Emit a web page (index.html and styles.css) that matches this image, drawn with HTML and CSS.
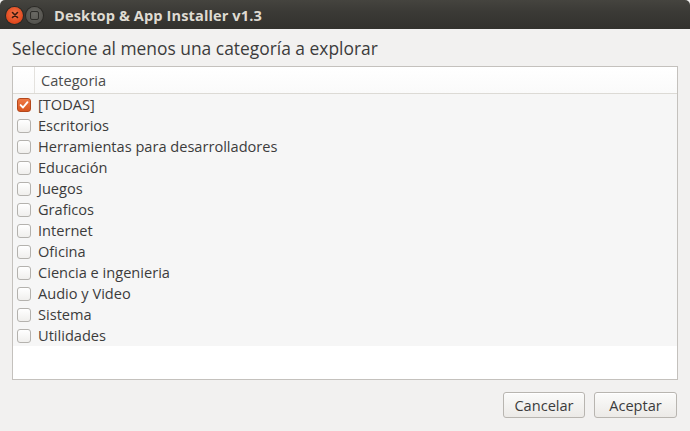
FILE: index.html
```html
<!DOCTYPE html>
<html>
<head>
<meta charset="utf-8">
<link rel="stylesheet" href="styles.css">
</head>
<body>
<div class="window">
  <div class="titlebar">
    <span class="btn-close"><svg width="16" height="16" viewBox="0 0 16 16"><path d="M5.5 5.5 L10.5 10.5 M10.5 5.5 L5.5 10.5" stroke="#3a1a0e" stroke-width="1.6" stroke-linecap="round"/></svg></span>
    <span class="btn-min"><span class="sq"></span></span>
    <span class="title">Desktop &amp; App Installer v1.3</span>
  </div>
  <div class="content">
    <div class="label">Seleccione al menos una categoría a explorar</div>
    <div class="list">
      <div class="header">
        <div class="hcell-check"></div>
        <div class="hcell">Categoria</div>
      </div>
      <div class="rows">
        <div class="row"><span class="cb checked"><svg width="14" height="14" viewBox="0 0 14 14"><path d="M3.6 7.1 L6 9.5 L10.5 4.2" fill="none" stroke="#fff" stroke-width="1.9" stroke-linecap="round" stroke-linejoin="round"/></svg></span><span class="txt">[TODAS]</span></div>
        <div class="row"><span class="cb"></span><span class="txt">Escritorios</span></div>
        <div class="row"><span class="cb"></span><span class="txt">Herramientas para desarrolladores</span></div>
        <div class="row"><span class="cb"></span><span class="txt">Educación</span></div>
        <div class="row"><span class="cb"></span><span class="txt">Juegos</span></div>
        <div class="row"><span class="cb"></span><span class="txt">Graficos</span></div>
        <div class="row"><span class="cb"></span><span class="txt">Internet</span></div>
        <div class="row"><span class="cb"></span><span class="txt">Oficina</span></div>
        <div class="row"><span class="cb"></span><span class="txt">Ciencia e ingenieria</span></div>
        <div class="row"><span class="cb"></span><span class="txt">Audio y Video</span></div>
        <div class="row"><span class="cb"></span><span class="txt">Sistema</span></div>
        <div class="row"><span class="cb"></span><span class="txt">Utilidades</span></div>
      </div>
      <div class="empty"></div>
    </div>
    <div class="buttons">
      <button class="button">Cancelar</button>
      <button class="button">Aceptar</button>
    </div>
  </div>
</div>
</body>
</html>
```

FILE: styles.css
```css
html, body {
  margin: 0;
  padding: 0;
  background: #f2f1f0;
  width: 690px;
  height: 431px;
  overflow: hidden;
}
body {
  font-family: "Open Sans", "DejaVu Sans", sans-serif;
  font-size: 14.6px;
  color: #3c3c3c;
}
.window {
  display: flex;
  flex-direction: column;
  height: 431px;
}
.titlebar {
  height: 29px;
  background: linear-gradient(#45443f, #3b3a36 40%, #32312d);
  border-radius: 5px 5px 0 0;
  display: flex;
  align-items: center;
  padding-left: 6px;
  padding-top: 1px;
  box-sizing: border-box;
}
.btn-close {
  width: 17px;
  height: 17px;
  border-radius: 50%;
  background: radial-gradient(circle at 50% 40%, #f4764a, #e0471c 70%, #c23a12);
  box-shadow: 0 0 0 1px #2a2925;
  display: flex;
  align-items: center;
  justify-content: center;
}
.btn-min {
  width: 17px;
  height: 17px;
  border-radius: 50%;
  background: radial-gradient(circle at 50% 40%, #6a6964, #55544f 70%, #4a4945);
  box-shadow: 0 0 0 1px #2a2925;
  margin-left: 3px;
  display: flex;
  align-items: center;
  justify-content: center;
}
.btn-min .sq {
  width: 7px;
  height: 7px;
  border: 1.5px solid #2e2d2a;
  border-radius: 2px;
}
.title {
  margin-left: 11px;
  color: #dfdbd2;
  font-weight: bold;
  font-size: 14.6px;
  letter-spacing: 0.1px;
}
.content {
  flex: 1;
  display: flex;
  flex-direction: column;
  padding: 0 12px 0 12px;
}
.label {
  margin-top: 8px;
  font-size: 17.4px;
  line-height: 22px;
  height: 22px;
  color: #3c3c3c;
}
.list {
  margin-top: 7px;
  border: 1px solid #c4c1bd;
  background: #ffffff;
  height: 314px;
  box-sizing: border-box;
  display: flex;
  flex-direction: column;
}
.header {
  height: 27px;
  display: flex;
  background: linear-gradient(#ffffff, #fafafa);
  border-bottom: 1px solid #dcdad5;
  box-sizing: border-box;
}
.hcell-check {
  width: 21px;
  border-right: 1px solid #e4e2de;
}
.hcell {
  padding-left: 6px;
  line-height: 26px;
  color: #4c4c4c;
}
.rows {
  background: #f6f6f6;
}
.row {
  height: 21px;
  display: flex;
  align-items: center;
  padding-left: 4px;
}
.cb {
  width: 14px;
  height: 14px;
  border: 1px solid #b4b2ae;
  border-radius: 3px;
  background: linear-gradient(#ffffff, #f0efed);
  box-sizing: border-box;
  display: flex;
  align-items: center;
  justify-content: center;
  flex-shrink: 0;
}
.cb.checked {
  border: 1px solid #b4481c;
  background: linear-gradient(#ef7a47, #d8561f);
}
.cb.checked svg {
  margin: -1px;
}
.txt {
  margin-left: 7px;
  color: #3c3c3c;
  line-height: 21px;
}
.empty {
  flex: 1;
  background: #ffffff;
}
.buttons {
  display: flex;
  justify-content: flex-end;
  gap: 9px;
  margin-top: 12px;
  padding-right: 1px;
}
.button {
  font-family: "Open Sans", "DejaVu Sans", sans-serif;
  font-size: 14.6px;
  color: #3c3c3c;
  height: 26px;
  padding: 0 8px;
  border: 1px solid #b8b5b0;
  border-radius: 3px;
  background: linear-gradient(#fbfbfa, #eceae7);
  box-shadow: inset 0 1px 0 #ffffff;
}
.button:first-child { width: 82px; }
.button:last-child { width: 83px; }
```
